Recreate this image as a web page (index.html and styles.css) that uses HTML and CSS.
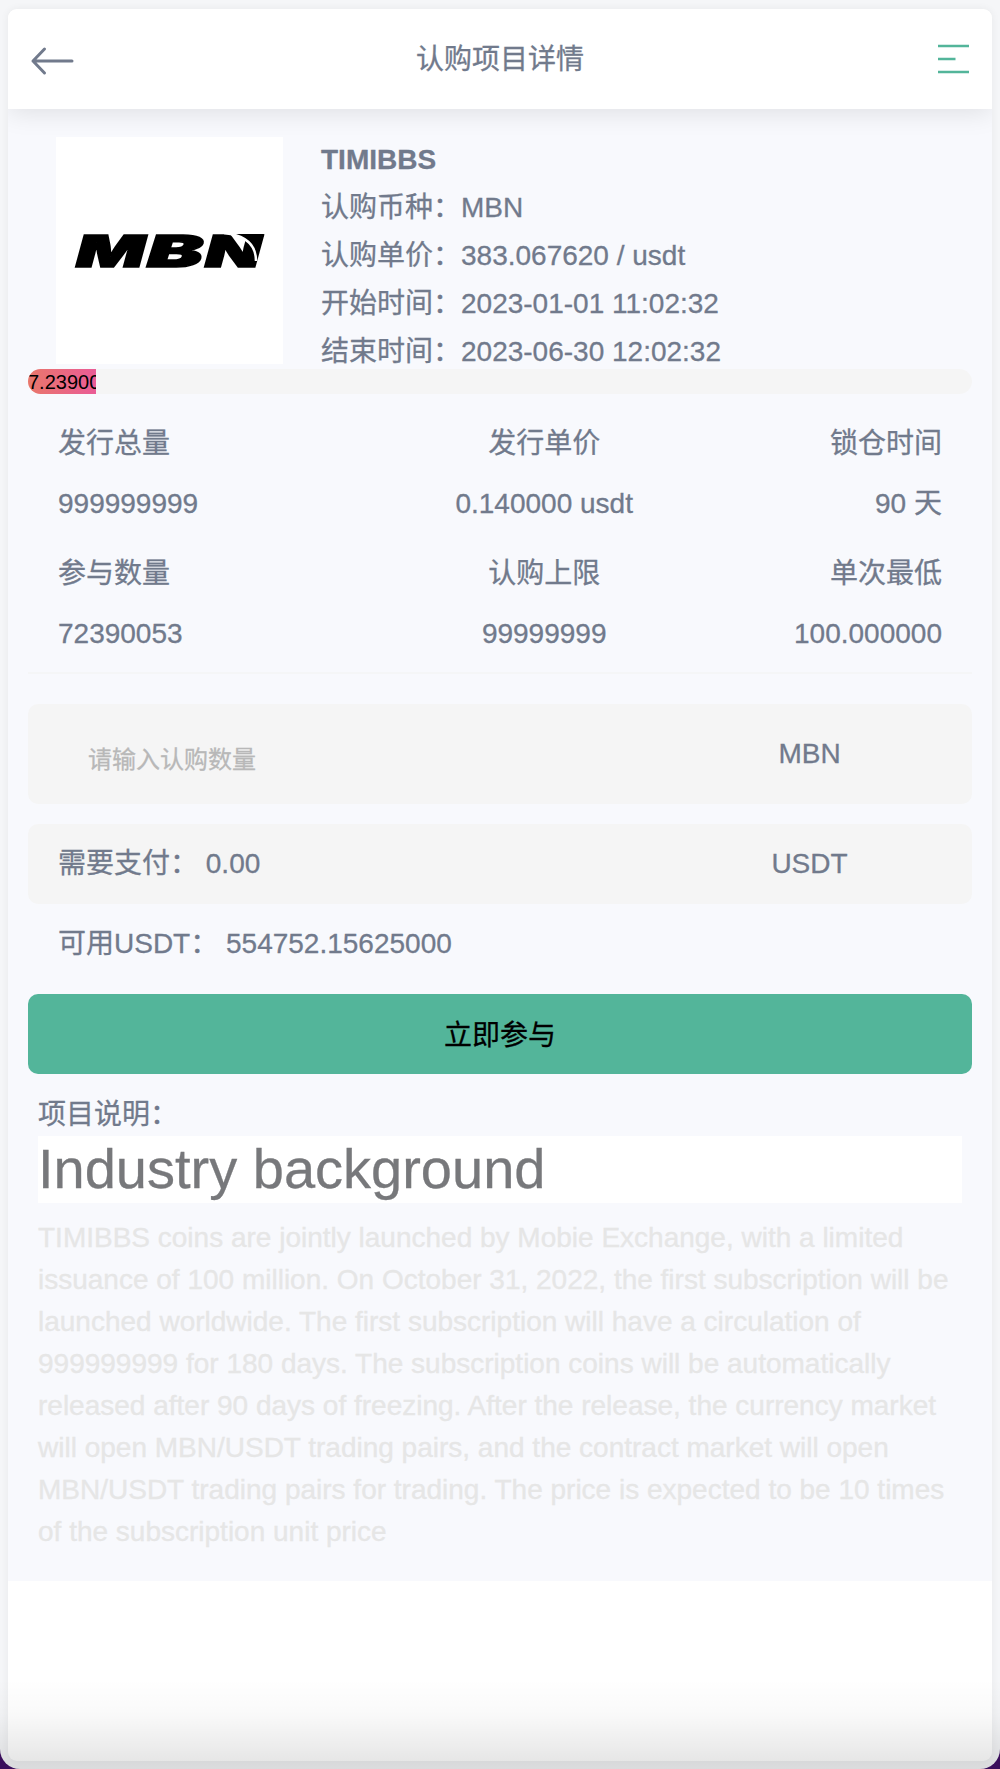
FILE: index.html
```html
<!DOCTYPE html>
<html lang="zh-CN">
<head>
  <meta charset="UTF-8">
  <title>认购项目详情</title>
  <link rel="stylesheet" href="styles.css">
</head>
<body>
  <div class="window">
    <div class="page">
      <header class="header">
        <svg class="back" width="44" height="30" viewBox="0 0 44 30">
          <path d="M42 15H3M14.5 3L3 15L14.5 27" />
        </svg>
        <h1>认购项目详情</h1>
        <svg class="menu" width="32" height="30" viewBox="0 0 32 30">
          <path d="M0 2H31M0 15H17.5M0 28H31" />
        </svg>
      </header>

      <main class="content">
        <div class="project">
          <svg class="logo" viewBox="0 0 227 227">
            <g class="logo-text">
              <text x="20" y="129.5" textLength="69" lengthAdjust="spacingAndGlyphs">M</text>
              <text x="91" y="129.5" textLength="56" lengthAdjust="spacingAndGlyphs">B</text>
              <text x="149" y="129.5" textLength="56" lengthAdjust="spacingAndGlyphs">N</text>
            </g>
            <path class="logo-wedge" d="M174 97H208L201 121C198 107 189 99 174 97Z" />
            <path class="logo-swoosh" d="M168 96C188 98 200 107 200 124" />
          </svg>
          <div class="info">
            <p><strong>TIMIBBS</strong></p>
            <p>认购币种：MBN</p>
            <p>认购单价：383.067620 / usdt</p>
            <p>开始时间：2023-01-01 11:02:32</p>
            <p>结束时间：2023-06-30 12:02:32</p>
          </div>
        </div>

        <div class="progress">
          <div class="progress-bar" style="width: 7.2390053%">7.2390053%</div>
        </div>

        <div class="stats">
          <div class="stat-row">
            <div><p>发行总量</p><p>999999999</p></div>
            <div><p>发行单价</p><p>0.140000 usdt</p></div>
            <div><p>锁仓时间</p><p>90 天</p></div>
          </div>
          <div class="stat-row">
            <div><p>参与数量</p><p>72390053</p></div>
            <div><p>认购上限</p><p>99999999</p></div>
            <div><p>单次最低</p><p>100.000000</p></div>
          </div>
        </div>

        <div class="field amount">
          <input type="text" placeholder="请输入认购数量">
          <span class="unit">MBN</span>
        </div>
        <div class="field pay">
          <span>需要支付： 0.00</span>
          <span class="unit">USDT</span>
        </div>
        <p class="balance">可用USDT： 554752.15625000</p>

        <button class="join-btn">立即参与</button>

        <section class="desc">
          <p class="desc-label">项目说明：</p>
          <h2>Industry background</h2>
          <p class="desc-text">TIMIBBS coins are jointly launched by Mobie Exchange, with a limited issuance of 100 million. On October 31, 2022, the first subscription will be launched worldwide. The first subscription will have a circulation of 999999999 for 180 days. The subscription coins will be automatically released after 90 days of freezing. After the release, the currency market will open MBN/USDT trading pairs, and the contract market will open MBN/USDT trading pairs for trading. The price is expected to be 10 times of the subscription unit price</p>
        </section>
      </main>
    </div>
  </div>
</body>
</html>
```

FILE: styles.css
```css
* {
  box-sizing: border-box;
  margin: 0;
  padding: 0;
}

body {
  height: 1769px;
  background: #3b0f5c;
  font-family: "Liberation Sans", "Noto Sans CJK SC", sans-serif;
  font-size: 28px;
  color: #717a8c;
  -webkit-text-stroke: 0.3px;
  overflow: hidden;
}

.window {
  position: relative;
  height: 1769px;
  padding: 9px 8px 8px;
  background: #f5f6f8;
  border-radius: 0 0 20px 20px;
  overflow: hidden;
}

/* shade along the bottom edge */
.window::after {
  content: "";
  position: absolute;
  left: 0;
  right: 0;
  bottom: 0;
  height: 90px;
  background: linear-gradient(rgba(0, 0, 0, 0), rgba(0, 0, 0, 0.025) 40%, rgba(0, 0, 0, 0.11));
}

.page {
  height: 1752px;
  background: #fff;
  border-radius: 9px;
  overflow: hidden;
  box-shadow: 0 0 8px rgba(0, 0, 0, 0.06);
}

.header {
  position: relative;
  display: flex;
  align-items: center;
  justify-content: space-between;
  height: 100px;
  padding: 0 22px;
  background: #fff;
  box-shadow: 0 4px 24px rgba(0, 0, 0, 0.1);
}

.header h1 {
  margin-right: 12px;
  padding-top: 2px;
  font-size: 28px;
  font-weight: normal;
  line-height: 98px;
}

.back,
.menu {
  fill: none;
}

.back {
  margin-top: 4px;
  stroke: #717a8c;
  stroke-width: 3;
  stroke-linecap: round;
  stroke-linejoin: round;
}

.menu {
  stroke: #53b59a;
  stroke-width: 2.4;
}

.content {
  height: 1472px;
  padding: 26px 20px 0;
  background: #f8f9fd;
}

.project {
  display: flex;
  height: 234px;
  padding-left: 28px;
}

.logo {
  width: 227px;
  height: 227px;
  margin: 2px 38px 0 0;
  background: #fff;
}

.logo-text {
  font-family: Inter, "Liberation Sans", sans-serif;
  font-size: 44px;
  font-weight: 900;
  font-style: italic;
  stroke: #000;
  stroke-width: 1.5;
}

.logo-swoosh {
  fill: none;
  stroke: #fff;
  stroke-width: 2.5;
}

.info {
  padding-top: 1px;
  line-height: 48px;
}

.progress {
  height: 25px;
  background: #f5f5f5;
  border-radius: 13px;
  overflow: hidden;
}

.progress-bar {
  height: 25px;
  line-height: 26px;
  font-size: 20px;
  color: #000;
  background: linear-gradient(to right, #e9776b, #ea5c96);
  -webkit-text-stroke: 0;
  overflow: hidden;
}

.stats {
  height: 280px;
  padding: 20px 30px 0;
  line-height: 60px;
  border-bottom: 2px solid #f5f6f7;
}

.stat-row {
  display: grid;
  grid-template-columns: 40% 30% 30%;
  margin-bottom: 10px;
  text-align: center;
}

.stat-row div:first-child {
  text-align: left;
}

.stat-row div:last-child {
  text-align: right;
}

.field {
  display: flex;
  justify-content: space-between;
  padding: 0 30px;
  background: #f5f5f5;
  border-radius: 10px;
}

.amount {
  height: 100px;
  margin: 30px 0 20px;
  line-height: 100px;
}

.amount input {
  width: 500px;
  height: 80px;
  margin-top: 16px;
  padding-left: 30px;
  border: none;
  background: none;
  font: inherit;
  font-size: 24px;
}

.amount input::placeholder {
  color: #b8b8b8;
}

.pay {
  height: 80px;
  line-height: 80px;
}

.unit {
  width: 265px;
  text-align: center;
}

.balance {
  padding-left: 30px;
  line-height: 80px;
}

.join-btn {
  display: block;
  width: 100%;
  height: 80px;
  margin-top: 10px;
  padding-bottom: 3px;
  border: none;
  border-radius: 10px;
  background: #53b59a;
  font: inherit;
  color: #000;
}

.desc {
  padding: 20px 10px 0;
}

.desc-label {
  line-height: 42px;
}

.desc h2 {
  height: 67px;
  line-height: 66px;
  font-size: 56px;
  font-weight: normal;
  color: #77787b;
  background: #fff;
}

.desc-text {
  margin-top: 14px;
  line-height: 42px;
  color: #e6e6e6;
}
```
